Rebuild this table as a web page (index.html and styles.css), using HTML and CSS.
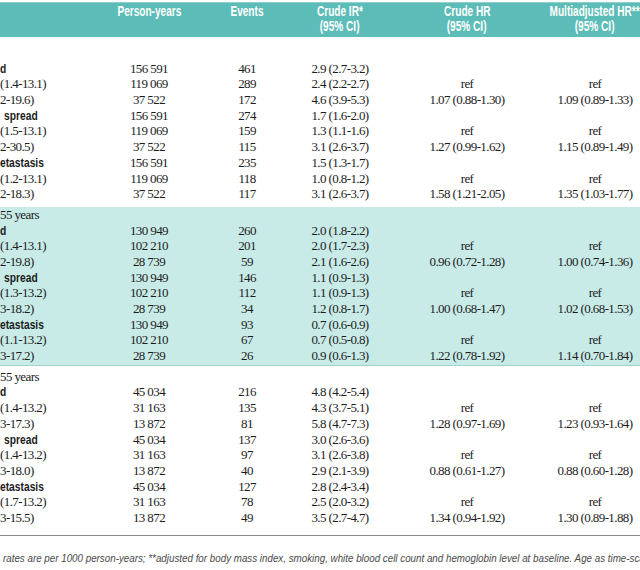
FILE: index.html
```html
<!DOCTYPE html>
<html>
<head>
<meta charset="utf-8">
<link rel="stylesheet" href="styles.css">
</head>
<body>
<div class="sheet">
  <div class="row head">
    <div class="c lab"></div>
    <div class="h"><span class="nar">Person-years</span></div>
    <div class="h"><span class="nar">Events</span></div>
    <div class="h"><span class="nar">Crude IR*</span><span class="nar">(95% CI)</span></div>
    <div class="h"><span class="nar">Crude HR</span><span class="nar">(95% CI)</span></div>
    <div class="h"><span class="nar">Multiadjusted HR**</span><span class="nar">(95% CI)</span></div>
  </div>

  <div class="sec first">
    <div class="row"><div class="c lab"></div></div>
    <div class="row"><div class="c lab b"><span class="bn">d</span></div><div class="c">156 591</div><div class="c">461</div><div class="c">2.9 (2.7-3.2)</div><div class="c"></div><div class="c"></div></div>
    <div class="row"><div class="c lab">(1.4-13.1)</div><div class="c">119 069</div><div class="c">289</div><div class="c">2.4 (2.2-2.7)</div><div class="c">ref</div><div class="c">ref</div></div>
    <div class="row"><div class="c lab">2-19.6)</div><div class="c">37 522</div><div class="c">172</div><div class="c">4.6 (3.9-5.3)</div><div class="c">1.07 (0.88-1.30)</div><div class="c">1.09 (0.89-1.33)</div></div>
    <div class="row"><div class="c lab b ind"><span class="bn">spread</span></div><div class="c">156 591</div><div class="c">274</div><div class="c">1.7 (1.6-2.0)</div><div class="c"></div><div class="c"></div></div>
    <div class="row"><div class="c lab">(1.5-13.1)</div><div class="c">119 069</div><div class="c">159</div><div class="c">1.3 (1.1-1.6)</div><div class="c">ref</div><div class="c">ref</div></div>
    <div class="row"><div class="c lab">2-30.5)</div><div class="c">37 522</div><div class="c">115</div><div class="c">3.1 (2.6-3.7)</div><div class="c">1.27 (0.99-1.62)</div><div class="c">1.15 (0.89-1.49)</div></div>
    <div class="row"><div class="c lab b"><span class="bn">etastasis</span></div><div class="c">156 591</div><div class="c">235</div><div class="c">1.5 (1.3-1.7)</div><div class="c"></div><div class="c"></div></div>
    <div class="row"><div class="c lab">(1.2-13.1)</div><div class="c">119 069</div><div class="c">118</div><div class="c">1.0 (0.8-1.2)</div><div class="c">ref</div><div class="c">ref</div></div>
    <div class="row"><div class="c lab">2-18.3)</div><div class="c">37 522</div><div class="c">117</div><div class="c">3.1 (2.6-3.7)</div><div class="c">1.58 (1.21-2.05)</div><div class="c">1.35 (1.03-1.77)</div></div>
  </div>

  <div class="sec tint">
    <div class="row"><div class="c lab">55 years</div></div>
    <div class="row"><div class="c lab b"><span class="bn">d</span></div><div class="c">130 949</div><div class="c">260</div><div class="c">2.0 (1.8-2.2)</div><div class="c"></div><div class="c"></div></div>
    <div class="row"><div class="c lab">(1.4-13.1)</div><div class="c">102 210</div><div class="c">201</div><div class="c">2.0 (1.7-2.3)</div><div class="c">ref</div><div class="c">ref</div></div>
    <div class="row"><div class="c lab">2-19.8)</div><div class="c">28 739</div><div class="c">59</div><div class="c">2.1 (1.6-2.6)</div><div class="c">0.96 (0.72-1.28)</div><div class="c">1.00 (0.74-1.36)</div></div>
    <div class="row"><div class="c lab b ind"><span class="bn">spread</span></div><div class="c">130 949</div><div class="c">146</div><div class="c">1.1 (0.9-1.3)</div><div class="c"></div><div class="c"></div></div>
    <div class="row"><div class="c lab">(1.3-13.2)</div><div class="c">102 210</div><div class="c">112</div><div class="c">1.1 (0.9-1.3)</div><div class="c">ref</div><div class="c">ref</div></div>
    <div class="row"><div class="c lab">3-18.2)</div><div class="c">28 739</div><div class="c">34</div><div class="c">1.2 (0.8-1.7)</div><div class="c">1.00 (0.68-1.47)</div><div class="c">1.02 (0.68-1.53)</div></div>
    <div class="row"><div class="c lab b"><span class="bn">etastasis</span></div><div class="c">130 949</div><div class="c">93</div><div class="c">0.7 (0.6-0.9)</div><div class="c"></div><div class="c"></div></div>
    <div class="row"><div class="c lab">(1.1-13.2)</div><div class="c">102 210</div><div class="c">67</div><div class="c">0.7 (0.5-0.8)</div><div class="c">ref</div><div class="c">ref</div></div>
    <div class="row"><div class="c lab">3-17.2)</div><div class="c">28 739</div><div class="c">26</div><div class="c">0.9 (0.6-1.3)</div><div class="c">1.22 (0.78-1.92)</div><div class="c">1.14 (0.70-1.84)</div></div>
  </div>

  <div class="sec last">
    <div class="row"><div class="c lab">55 years</div></div>
    <div class="row"><div class="c lab b"><span class="bn">d</span></div><div class="c">45 034</div><div class="c">216</div><div class="c">4.8 (4.2-5.4)</div><div class="c"></div><div class="c"></div></div>
    <div class="row"><div class="c lab">(1.4-13.2)</div><div class="c">31 163</div><div class="c">135</div><div class="c">4.3 (3.7-5.1)</div><div class="c">ref</div><div class="c">ref</div></div>
    <div class="row"><div class="c lab">3-17.3)</div><div class="c">13 872</div><div class="c">81</div><div class="c">5.8 (4.7-7.3)</div><div class="c">1.28 (0.97-1.69)</div><div class="c">1.23 (0.93-1.64)</div></div>
    <div class="row"><div class="c lab b ind"><span class="bn">spread</span></div><div class="c">45 034</div><div class="c">137</div><div class="c">3.0 (2.6-3.6)</div><div class="c"></div><div class="c"></div></div>
    <div class="row"><div class="c lab">(1.4-13.2)</div><div class="c">31 163</div><div class="c">97</div><div class="c">3.1 (2.6-3.8)</div><div class="c">ref</div><div class="c">ref</div></div>
    <div class="row"><div class="c lab">3-18.0)</div><div class="c">13 872</div><div class="c">40</div><div class="c">2.9 (2.1-3.9)</div><div class="c">0.88 (0.61-1.27)</div><div class="c">0.88 (0.60-1.28)</div></div>
    <div class="row"><div class="c lab b"><span class="bn">etastasis</span></div><div class="c">45 034</div><div class="c">127</div><div class="c">2.8 (2.4-3.4)</div><div class="c"></div><div class="c"></div></div>
    <div class="row"><div class="c lab">(1.7-13.2)</div><div class="c">31 163</div><div class="c">78</div><div class="c">2.5 (2.0-3.2)</div><div class="c">ref</div><div class="c">ref</div></div>
    <div class="row"><div class="c lab">3-15.5)</div><div class="c">13 872</div><div class="c">49</div><div class="c">3.5 (2.7-4.7)</div><div class="c">1.34 (0.94-1.92)</div><div class="c">1.30 (0.89-1.88)</div></div>
  </div>

  <p class="note"><span class="nt">rates are per 1000 person-years; **adjusted for body mass index, smoking, white blood cell count and hemoglobin level at baseline. Age as time-scale.</span></p>
</div>
</body>
</html>
```

FILE: styles.css
```css
html, body {
  margin: 0;
  padding: 0;
  background: #ffffff;
}
.sheet {
  width: 640px;
  height: 570px;
  overflow: hidden;
  padding-top: 2px;
  box-sizing: border-box;
  font-family: "Liberation Serif", "Times New Roman", serif;
  font-size: 13px;
  color: #1c1c1c;
}
.row {
  display: grid;
  grid-template-columns: 100px 98px 98px 88px 166px 90px;
  height: 15.7px;
  line-height: 15.7px;
  letter-spacing: -0.6px;
  white-space: nowrap;
}
.c {
  text-align: center;
}
.c.lab {
  text-align: left;
}
.b {
  font-family: "Liberation Sans", Arial, sans-serif;
  font-weight: bold;
  font-size: 13.5px;
  letter-spacing: 0;
}
.bn {
  display: inline-block;
  transform: scaleX(0.76);
  transform-origin: left center;
}
.ind {
  padding-left: 4px;
}
.head {
  height: 35px;
  background: #5cbcb7;
  color: #ffffff;
  font-family: "Liberation Sans", Arial, sans-serif;
  font-weight: bold;
  font-size: 14px;
  line-height: 15px;
  letter-spacing: 0;
  padding-top: 1px;
  box-sizing: border-box;
  border-top: 1px solid #8fd0cc;
}
.h {
  display: flex;
  flex-direction: column;
  align-items: center;
}
.nar {
  display: block;
  transform: scaleX(0.72);
  transform-origin: center center;
}
.sec.first {
  padding-top: 8px;
}
.sec.tint {
  margin-top: 5px;
  background: #c8ebe8;
  padding-bottom: 1px;
  border-bottom: 1px solid #9fd3cf;
}
.sec.last {
  margin-top: 3px;
  padding-bottom: 9.5px;
  border-bottom: 1px solid #8a8a8a;
}
.note {
  margin: 15px 0 0 3px;
  font-family: "Liberation Sans", Arial, sans-serif;
  font-style: italic;
  font-size: 11px;
  line-height: 14px;
  color: #4a4a4a;
  white-space: nowrap;
}
.nt {
  display: inline-block;
  transform: scaleX(0.89);
  transform-origin: left center;
}
```
